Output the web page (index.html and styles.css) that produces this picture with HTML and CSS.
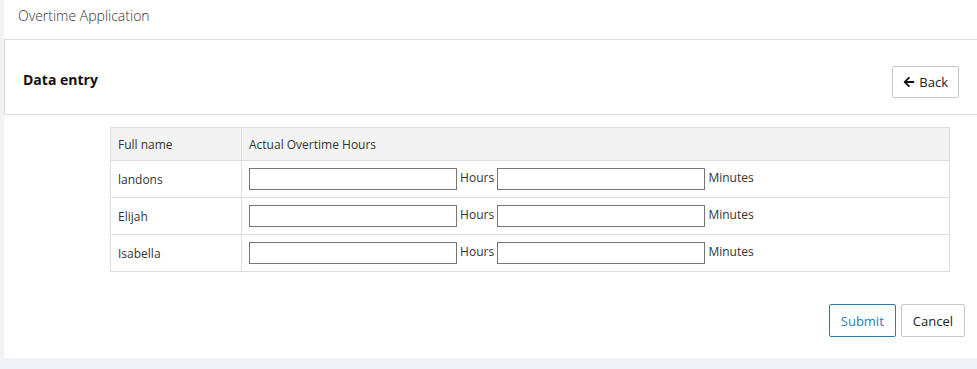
FILE: index.html
```html
<!DOCTYPE html>
<html lang="en">

<head>
    <meta charset="UTF-8">
    <meta name="viewport" content="width=device-width, initial-scale=1.0">
    <title>Overtime Application</title>
    <link rel="stylesheet" href="styles.css">
</head>

<body>

    <div class="page">
        <div class="topbar">
            <span class="app-title">Overtime Application</span>
        </div>

        <div class="panel-head">
            <h2>Data entry</h2>
            <button type="button" class="btn btn-back">
                <svg class="icon" viewBox="0 0 448 512" aria-hidden="true">
                    <path d="M257.5 445.1l-22.2 22.2c-9.4 9.4-24.6 9.4-33.9 0L7 273c-9.4-9.4-9.4-24.6 0-33.9L201.4 44.7c9.4-9.4 24.6-9.4 33.9 0l22.2 22.2c9.5 9.5 9.3 25-.4 34.3L136.6 216H424c13.3 0 24 10.7 24 24v32c0 13.3-10.7 24-24 24H136.6l120.5 114.8c9.8 9.3 10 24.8.4 34.3z" />
                </svg>
                Back
            </button>
        </div>

        <form class="entry-form">
            <table class="entry-table">
                <thead>
                    <tr>
                        <th class="col-name">Full name</th>
                        <th>Actual Overtime Hours</th>
                    </tr>
                </thead>
                <tbody>
                    <tr>
                        <td>landons</td>
                        <td>
                            <input type="text" name="hours_1"> Hours
                            <input type="text" name="minutes_1"> Minutes
                        </td>
                    </tr>
                    <tr>
                        <td>Elijah</td>
                        <td>
                            <input type="text" name="hours_2"> Hours
                            <input type="text" name="minutes_2"> Minutes
                        </td>
                    </tr>
                    <tr>
                        <td>Isabella</td>
                        <td>
                            <input type="text" name="hours_3"> Hours
                            <input type="text" name="minutes_3"> Minutes
                        </td>
                    </tr>
                </tbody>
            </table>

            <div class="form-actions">
                <button type="submit" class="btn btn-primary">Submit</button>
                <button type="button" class="btn">Cancel</button>
            </div>
        </form>
    </div>

</body>

</html>
```

FILE: styles.css
```css
:root {
    --line: #dedede;
    --text: #222;
}

* {
    box-sizing: border-box;
}

body {
    margin: 0;
    background-color: #f1f2f7;
    font-family: "Open Sans", "Noto Sans", sans-serif;
    font-size: 12px;
    color: var(--text);
}

.page {
    margin-left: 4px;
    height: 358px;
    background-color: #fff;
}

.topbar {
    height: 40px;
    padding: 6px 0 0 14px;
    border-bottom: 1px solid var(--line);
}

.app-title {
    font-size: 14px;
    font-weight: 300;
    color: #333;
}

.panel-head {
    display: flex;
    align-items: center;
    justify-content: space-between;
    height: 75px;
    padding: 9px 18px 0 18px;
    border-left: 1px solid var(--line);
    border-bottom: 1px solid var(--line);
}

.panel-head h2 {
    margin: 0 0 5px 0;
    font-size: 14px;
    font-weight: 700;
    color: #111;
}

.btn {
    display: inline-flex;
    align-items: center;
    gap: 4px;
    height: 33px;
    padding: 0 11px;
    border: 1px solid #c8c8c8;
    border-radius: 2px;
    background-color: #fff;
    font-family: inherit;
    font-size: 13px;
    color: #222;
    cursor: pointer;
}

.btn-back {
    height: 32px;
    padding: 0 10px;
}

.btn .icon {
    width: 12px;
    height: 12px;
    fill: #111;
}

.btn-primary {
    border-color: #1a7fc4;
    color: #1a7fc4;
}

.entry-form {
    padding: 12px 0 0 0;
}

.entry-table {
    width: 840px;
    margin-left: 106px;
    border-collapse: collapse;
    border: 1px solid var(--line);
}

.entry-table th,
.entry-table td {
    padding: 0 7px;
    border-bottom: 1px solid var(--line);
    font-weight: 400;
    text-align: left;
    color: #333;
}

.entry-table th {
    height: 33px;
    background-color: #f3f3f3;
}

.entry-table td {
    height: 37px;
    white-space: nowrap;
}

.entry-table .col-name,
.entry-table td:first-child {
    width: 131px;
    border-right: 1px solid var(--line);
}

.entry-table input {
    width: 208px;
    height: 22px;
    margin: 0;
    padding: 0 4px;
    border: 1px solid #767676;
    border-radius: 0;
    vertical-align: middle;
}

.form-actions {
    display: flex;
    justify-content: flex-end;
    gap: 5px;
    margin-top: 32px;
    padding-right: 12px;
}
```
